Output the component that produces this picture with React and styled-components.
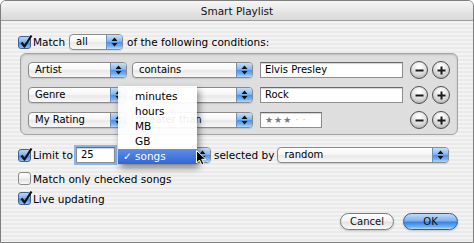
import React from 'react'
import styled, { createGlobalStyle } from 'styled-components'

const GlobalStyle = createGlobalStyle`
  html, body {
    margin: 0;
    padding: 0;
    background: #ffffff;
  }
  body {
    font-family: "DejaVu Sans", "Liberation Sans", sans-serif;
    font-size: 10px;
    color: #000;
  }
`

const Window = styled.div`
  position: relative;
  width: 474px;
  height: 243px;
  box-sizing: border-box;
  border: 1px solid #7d7d7d;
  border-radius: 6px 6px 0 0;
  overflow: hidden;
  background: repeating-linear-gradient(to bottom, #f3f3f3 0 2px, #eaeaea 2px 4px);
`
const TitleBar = styled.div`
  height: 19px;
  border-bottom: 1px solid #9c9c9c;
  background: linear-gradient(#f6f6f6, #e4e4e4 60%, #d8d8d8);
  display: flex;
  align-items: center;
  justify-content: center;
  font-size: 10.5px;
  color: #111;
`
const Body = styled.div`
  display: flex;
  flex-direction: column;
  padding: 13px 15px 0 17px;
`
const Row = styled.div`
  display: flex;
  align-items: center;
  height: ${p => p.$h || 16}px;
  margin-top: ${p => p.$mt || 0}px;
`
const Label = styled.span`
  white-space: nowrap;
  font-size: 10.5px;
  margin-left: ${p => p.$ml || 0}px;
`
const Conditions = styled.div`
  box-sizing: border-box;
  width: 438px;
  height: 82px;
  margin: 3px 0 0 2px;
  padding: 8px 7px 6px;
  border: 1px solid #a4a4a4;
  border-radius: 6px;
  background: #dedede;
  box-shadow: inset 0 1px 2px rgba(0, 0, 0, 0.15);
  display: flex;
  flex-direction: column;
  gap: 9px;
`
const PopupBox = styled.div`
  box-sizing: border-box;
  width: ${p => p.$w}px;
  height: 16px;
  margin-left: ${p => p.$ml || 0}px;
  border: 1px solid #8a8a8a;
  border-radius: 4px;
  overflow: hidden;
  display: flex;
  background: linear-gradient(#ffffff, #f6f6f6 45%, #e9e9e9 55%, #f8f8f8);
  box-shadow: 0 1px 1px rgba(0, 0, 0, 0.12);
`
const PopupText = styled.span`
  flex: 1;
  padding-left: 6px;
  line-height: 14px;
  white-space: nowrap;
  overflow: hidden;
`
const PopupArrows = styled.span`
  width: 15px;
  border-left: 1px solid #6b8fbf;
  display: flex;
  align-items: center;
  justify-content: center;
  background: linear-gradient(#c6dff8, #86b9f0 45%, #4f92e6 52%, #72b1f4 80%, #b4dafc);
`
const Field = styled.div`
  box-sizing: border-box;
  width: ${p => p.$w}px;
  height: 16px;
  margin-left: ${p => p.$ml || 0}px;
  border: 1px solid #8e8e8e;
  border-top-color: #6a6a6a;
  background: #fff;
  box-shadow: inset 0 1px 1px rgba(0, 0, 0, 0.18);
  padding-left: 4px;
  line-height: 14px;
  white-space: nowrap;
  ${p => p.$focus && `
    outline: 2px solid #8ab5ec;
    outline-offset: 0;
  `}
`
const Stars = styled.span`
  color: #7a7a7a;
  font-size: 9px;
  letter-spacing: 1px;
`
const Dots = styled.span`
  color: #c8c8c8;
  letter-spacing: 4px;
  margin-left: 3px;
`
const RoundButton = styled.div`
  box-sizing: border-box;
  width: 18px;
  height: 18px;
  border-radius: 50%;
  border: 1.5px solid #4d4d4d;
  background: radial-gradient(circle at 50% 30%, #ffffff 10%, #dadada 55%, #b9b9b9 80%, #e6e6e6);
  display: flex;
  align-items: center;
  justify-content: center;
  margin-left: ${p => p.$ml || 0}px;
`
const CheckBox = styled.span`
  position: relative;
  box-sizing: border-box;
  width: 13px;
  height: 13px;
  flex: none;
  border-radius: 3px;
  border: 1px solid ${p => (p.$on ? '#45628f' : '#8a8a8a')};
  background: ${p =>
    p.$on
      ? 'linear-gradient(#b9d6f6, #7eb3ee 45%, #4a8de3 55%, #8cc3f6)'
      : 'linear-gradient(#ffffff, #f1f1f1 50%, #e2e2e2 55%, #f7f7f7)'};
`
const CheckMark = styled.svg`
  position: absolute;
  left: 0;
  top: -3px;
`
const ButtonRow = styled.div`
  display: flex;
  justify-content: flex-end;
  gap: 9px;
  margin-top: 8px;
`
const PushButton = styled.div`
  box-sizing: border-box;
  width: ${p => p.$w}px;
  height: 17px;
  border-radius: 9px;
  display: flex;
  align-items: center;
  justify-content: center;
  border: 1px solid ${p => (p.$primary ? '#2f5d9f' : '#7a7a7a')};
  background: ${p =>
    p.$primary
      ? 'linear-gradient(#c3dcf8, #7cb2ef 45%, #3b82e0 55%, #6cb0f6 85%, #b6dcfc)'
      : 'linear-gradient(#ffffff, #f4f4f4 45%, #e3e3e3 55%, #fafafa)'};
  box-shadow: 0 1px 2px rgba(0, 0, 0, 0.2);
  color: #111;
`
const Menu = styled.div`
  position: absolute;
  left: 117px;
  top: 85px;
  width: 79px;
  padding-top: 3px;
  background: rgba(255, 255, 255, 0.93);
  box-shadow: 2px 4px 7px rgba(0, 0, 0, 0.45);
  font-size: 10.5px;
`
const MenuItem = styled.div`
  position: relative;
  height: 15px;
  line-height: 15px;
  padding-left: 17px;
  color: ${p => (p.$selected ? '#fff' : '#000')};
  background: ${p => (p.$selected ? 'linear-gradient(#5a8ee8, #3466d3)' : 'transparent')};
`
const Tick = styled.span`
  position: absolute;
  left: 5px;
`
const Cursor = styled.svg`
  position: absolute;
  left: 195px;
  top: 149px;
`

const Arrows = () => (
  <svg width="7" height="10" viewBox="0 0 7 10">
    <path d="M3.5 0.5 L6.5 4 H0.5 Z M3.5 9.5 L6.5 6 H0.5 Z" fill="#111" />
  </svg>
)

const Popup = ({ w, ml, children }) => (
  <PopupBox $w={w} $ml={ml}>
    <PopupText>{children}</PopupText>
    <PopupArrows>
      <Arrows />
    </PopupArrows>
  </PopupBox>
)

const Check = ({ on }) => (
  <CheckBox $on={on}>
    {on && (
      <CheckMark width="15" height="15" viewBox="0 0 15 15">
        <path d="M2.5 8.5 L5.5 12.5 L12.5 1.5" fill="none" stroke="#111" strokeWidth="2.2" strokeLinejoin="round" />
      </CheckMark>
    )}
  </CheckBox>
)

const Round = ({ plus, ml }) => (
  <RoundButton $ml={ml}>
    <svg width="9" height="9" viewBox="0 0 9 9">
      <path d={plus ? 'M0.5 4.5 H8.5 M4.5 0.5 V8.5' : 'M0.5 4.5 H8.5'} stroke="#1a1a1a" strokeWidth="2" />
    </svg>
  </RoundButton>
)

const Condition = ({ field, op, children, fieldWidth = 143 }) => (
  <Row>
    <Popup w={99}>{field}</Popup>
    <Popup w={121} ml={5}>{op}</Popup>
    <Field $w={fieldWidth} $ml={7}>{children}</Field>
    <Round ml={7 + 143 - fieldWidth} />
    <Round plus ml={4} />
  </Row>
)

const units = ['minutes', 'hours', 'MB', 'GB', 'songs']

const App = () => (
  <>
    <GlobalStyle />
    <Window>
      <TitleBar>Smart Playlist</TitleBar>
      <Body>
        <Row>
          <Check on />
          <Label $ml={2}>Match</Label>
          <Popup w={54} ml={4}>all</Popup>
          <Label $ml={4}>of the following conditions:</Label>
        </Row>
        <Conditions>
          <Condition field="Artist" op="contains">Elvis Presley</Condition>
          <Condition field="Genre">Rock</Condition>
          <Condition field="My Rating" op="greater than" fieldWidth={62}>
            <Stars>★★★</Stars>
            <Dots>··</Dots>
          </Condition>
        </Conditions>
        <Row $mt={12}>
          <Check on />
          <Label $ml={2}>Limit to</Label>
          <Field $w={39} $ml={3} $focus>25</Field>
          <Popup w={93} ml={3} />
          <Label $ml={3}>selected by</Label>
          <Popup w={172} ml={3}>random</Popup>
        </Row>
        <Row $h={13} $mt={9}>
          <Check />
          <Label $ml={2}>Match only checked songs</Label>
        </Row>
        <Row $h={13} $mt={7}>
          <Check on />
          <Label $ml={2}>Live updating</Label>
        </Row>
        <ButtonRow>
          <PushButton $w={54}>Cancel</PushButton>
          <PushButton $w={55} $primary>OK</PushButton>
        </ButtonRow>
      </Body>
      <Menu>
        {units.map(u => (
          <MenuItem key={u} $selected={u === 'songs'}>
            {u === 'songs' && <Tick>✓</Tick>}
            {u}
          </MenuItem>
        ))}
      </Menu>
      <Cursor width="11" height="16" viewBox="0 0 11 16">
        <path d="M0.5 0.5 V13 L3.5 10 L6 15 L8 14 L5.7 9.3 H9.8 Z" fill="#000" stroke="#fff" strokeWidth="1" />
      </Cursor>
    </Window>
  </>
)

export default App
